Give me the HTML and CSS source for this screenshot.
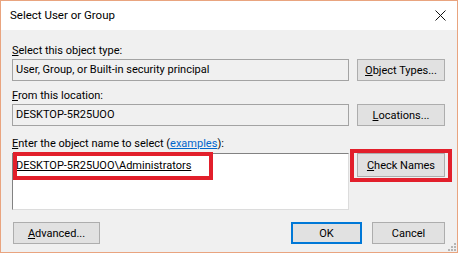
FILE: index.html
```html
<!DOCTYPE html>
<html lang="en">
<head>
    <meta charset="UTF-8">
    <title>Select User or Group</title>
    <link rel="stylesheet" href="styles.css">
</head>
<body>
    <div class="window">
        <div class="titlebar">
            <span class="title">Select User or Group</span>
            <svg class="close" width="11" height="11" viewBox="0 0 11 11">
                <path d="M0.5 0.5 L10.5 10.5 M10.5 0.5 L0.5 10.5" stroke="#111" stroke-width="1" fill="none"/>
            </svg>
        </div>

        <div class="content">
            <div class="label label-first"><u>S</u>elect this object type:</div>
            <div class="row">
                <div class="field readonly">User, Group, or Built-in security principal</div>
                <button class="btn"><u>O</u>bject Types...</button>
            </div>

            <div class="label"><u>F</u>rom this location:</div>
            <div class="row">
                <div class="field readonly">DESKTOP-5R25UOO</div>
                <button class="btn"><u>L</u>ocations...</button>
            </div>

            <div class="label label-names"><u>E</u>nter the object name to select (<a href="#">examples</a>):</div>
            <div class="row row-names">
                <div class="field names">
                    <span class="name">DESKTOP-5R25UOO\Administrators</span>
                    <span class="mark mark-name"></span>
                </div>
                <div class="btn-wrap">
                    <button class="btn btn-check"><u>C</u>heck Names</button>
                    <span class="mark mark-btn"></span>
                </div>
            </div>

            <div class="footer">
                <button class="btn btn-advanced"><u>A</u>dvanced...</button>
                <div class="actions">
                    <button class="btn btn-ok">OK</button>
                    <button class="btn btn-cancel">Cancel</button>
                </div>
            </div>
        </div>

        <svg class="grip" width="9" height="9" viewBox="0 0 9 9">
            <rect x="7" y="1" width="2" height="2" fill="#b5b5b5"/>
            <rect x="4" y="4" width="2" height="2" fill="#b5b5b5"/>
            <rect x="7" y="4" width="2" height="2" fill="#b5b5b5"/>
            <rect x="1" y="7" width="2" height="2" fill="#b5b5b5"/>
            <rect x="4" y="7" width="2" height="2" fill="#b5b5b5"/>
            <rect x="7" y="7" width="2" height="2" fill="#b5b5b5"/>
        </svg>
    </div>
</body>
</html>
```

FILE: styles.css
```css
body {
    margin: 0;
    font-family: Roboto, 'Liberation Sans', Arial, sans-serif;
    font-size: 11px;
    color: #000;
    background: #fff;
}

.window {
    position: relative;
    width: 458px;
    height: 253px;
    box-sizing: border-box;
    border: 1px solid #e9a47f;
    background-color: #f0f0f0;
    overflow: hidden;
}

.titlebar {
    height: 29px;
    background-color: #fff;
    display: flex;
    align-items: center;
    justify-content: space-between;
    padding: 0 11px 0 9px;
}
.title {
    font-size: 11.5px;
    line-height: 29px;
}
.close {
    display: block;
}

.content {
    padding: 13px 12px 0 11px;
}

.label {
    line-height: 16px;
    height: 16px;
    margin-top: 7px;
    white-space: nowrap;
}
.label-first {
    margin-top: 0;
}
.label-names {
    margin-top: 10px;
}
.label a {
    color: #0066cc;
}

.row {
    display: grid;
    grid-template-columns: 337px 88px;
    column-gap: 8px;
    align-items: start;
}
.row-names {
    margin-top: 1px;
}

.field {
    box-sizing: border-box;
    height: 22px;
    line-height: 20px;
    padding: 0 3px;
    white-space: nowrap;
}
.readonly {
    border: 1px solid #a3a3a3;
    background-color: #f0f0f0;
}
.names {
    position: relative;
    height: 57px;
    background-color: #fff;
    border-top: 1px solid #828282;
    border-left: 1px solid #828282;
    border-right: 1px solid #dcdcdc;
    border-bottom: 1px solid #dcdcdc;
    padding-top: 4px;
    line-height: 15px;
}
.name {
    text-decoration: underline;
}

.btn {
    box-sizing: border-box;
    height: 22px;
    width: 88px;
    padding: 0;
    font-family: inherit;
    font-size: 11px;
    color: #000;
    background-color: #e1e1e1;
    border: 1px solid #adadad;
    border-radius: 0;
}
.btn-wrap {
    position: relative;
}
.btn-check {
    height: 24px;
}

.mark {
    position: absolute;
    box-sizing: border-box;
    border: 4px solid #e21f2b;
}
.mark-name {
    left: 0;
    top: -2px;
    width: 200px;
    height: 28px;
}
.mark-btn {
    left: -7px;
    top: -4px;
    right: -7px;
    bottom: -5px;
}

.footer {
    display: flex;
    justify-content: space-between;
    margin-top: 12px;
    padding-left: 1px;
}
.btn-advanced {
    width: 87px;
}
.actions {
    display: flex;
    gap: 10px;
}
.btn-ok {
    width: 71px;
    border: 2px solid #0078d7;
}
.btn-cancel {
    width: 73px;
}

.grip {
    position: absolute;
    right: 1px;
    bottom: 1px;
}
```
